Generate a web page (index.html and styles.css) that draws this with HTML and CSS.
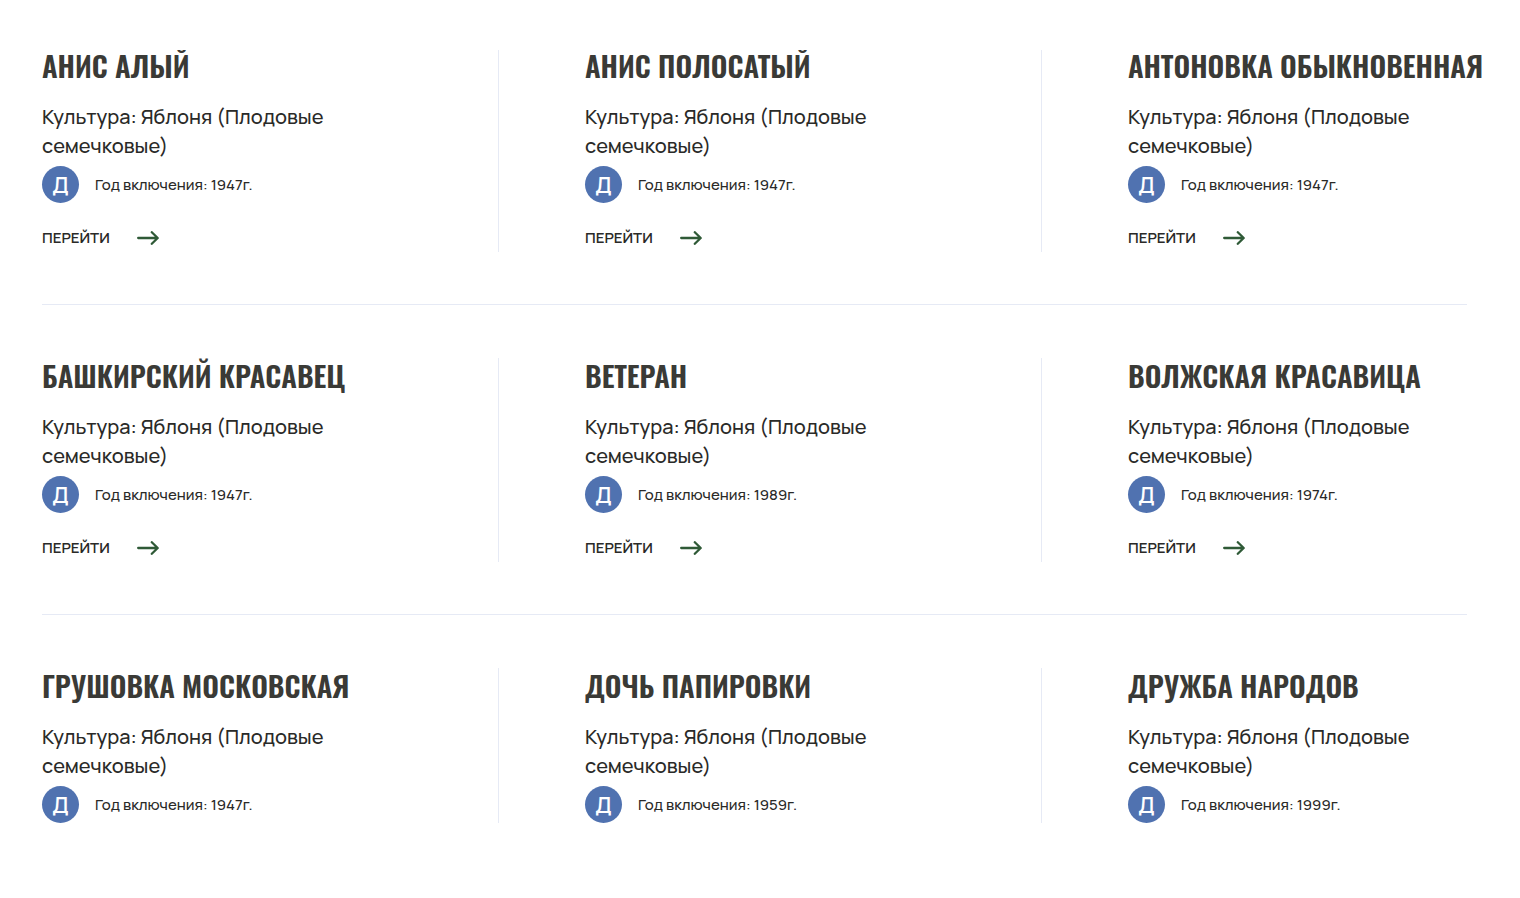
FILE: index.html
```
<!DOCTYPE html>
<html lang="ru">
<head>
  <meta charset="UTF-8">
  <meta name="viewport" content="width=device-width, initial-scale=1">
  <title>Сорта яблони</title>
  <link rel="stylesheet" href="styles.css">
</head>
<body>
  <svg class="sprite" width="0" height="0" aria-hidden="true">
    <symbol id="arrow" viewBox="0 0 22 14">
      <path d="M1.200 7h19M14.800 1.200L20.700 7l-5.900 5.800" fill="none" stroke="currentColor" stroke-width="2.300" stroke-linecap="round" stroke-linejoin="round"/>
    </symbol>
  </svg>

  <main class="catalog">
    <div class="catalog-list" id="list"></div>
  </main>

  <script>
    const rows = [
      [["Анис алый", 1947], ["Анис полосатый", 1947], ["Антоновка обыкновенная", 1947]],
      [["Башкирский красавец", 1947], ["Ветеран", 1989], ["Волжская красавица", 1974]],
      [["Грушовка московская", 1947], ["Дочь папировки", 1959], ["Дружба народов", 1999]]
    ];

    const link = `
      <a class="more" href="#">
        <span>Перейти</span>
        <svg class="arrow" aria-hidden="true"><use href="#arrow"/></svg>
      </a>`;

    // в последнем ряду ссылка не выводится
    document.getElementById("list").innerHTML = rows.map((row, i) => `
      <div class="row">
        ${row.map(([name, year]) => `
          <article class="card">
            <h2 class="title">${name}</h2>
            <p class="culture">Культура: Яблоня (Плодовые семечковые)</p>
            <div class="year">
              <span class="badge">Д</span>
              <span>Год включения: ${year}г.</span>
            </div>
            ${i < rows.length - 1 ? link : ""}
          </article>`).join("")}
      </div>`).join("");
  </script>
</body>
</html>
```
FILE: styles.css
```
:root {
  --text: #2a2a28;
  --title: #3a3a36;
  --line: #e6eaf5;
  --blue: #5072b0;
  --green: #2f5a37;
}

* {
  box-sizing: border-box;
}

body {
  margin: 0;
  background: #fff;
  color: var(--text);
  font-family: Manrope, Inter, "Open Sans", sans-serif;
  font-weight: 500;
}

.sprite {
  position: absolute;
}

.catalog {
  display: flow-root;
  margin: 50px 53px 0 42px;
  overflow-x: visible;
  overflow-y: clip;
}

.catalog-list {
  margin-top: -2px;
}

.row {
  display: grid;
  grid-template-columns: 457fr 457fr 339fr;
  column-gap: 86px;
}

.row:not(:last-child) {
  padding-bottom: 52px;
  margin-bottom: 53px;
  border-bottom: 1px solid var(--line);
}

.card {
  min-width: 0;
  padding-right: 86px;
  border-right: 1px solid var(--line);
}

.card:last-child {
  padding-right: 0;
  border-right: none;
}

.title {
  margin: 0 0 20px;
  font-family: Oswald, "Roboto Condensed", "Liberation Sans Narrow", "DejaVu Sans Condensed", sans-serif;
  font-size: 29px;
  font-weight: 600;
  line-height: 34px;
  color: var(--title);
  text-transform: uppercase;
  white-space: nowrap;
}

.culture {
  margin: 0 0 6px;
  font-size: 20px;
  line-height: 29px;
}

.year {
  display: flex;
  align-items: center;
  gap: 16px;
  font-size: 15px;
}

.badge {
  display: flex;
  align-items: center;
  justify-content: center;
  width: 37px;
  height: 37px;
  border-radius: 50%;
  background: var(--blue);
  color: #fff;
  font-size: 22px;
  font-weight: 600;
}

.more {
  display: inline-flex;
  align-items: center;
  gap: 27px;
  margin-top: 20px;
  color: inherit;
  font-size: 15px;
  font-weight: 600;
  line-height: 29px;
  text-decoration: none;
  text-transform: uppercase;
}

.arrow {
  width: 22px;
  height: 14px;
  color: var(--green);
}
```
